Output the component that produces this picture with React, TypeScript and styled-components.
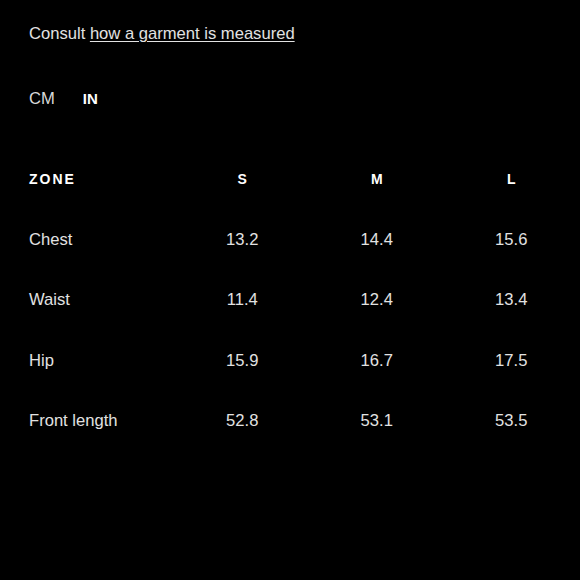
import React from "react";
import styled, { createGlobalStyle } from "styled-components";

const Global = createGlobalStyle`
  html, body { margin: 0; padding: 0; background: #000; }
  body { font-family: "Liberation Sans", Arial, sans-serif; }
`;

const Page = styled.div`
  width: 580px;
  height: 580px;
  box-sizing: border-box;
  background: #000;
  color: #e2e2e2;
  padding: 24px 29px 0 29px;
  display: flex;
  flex-direction: column;
`;

const Intro = styled.p`
  margin: 0;
  font-size: 16.6px;
  line-height: 20px;
  color: #e2e2e2;
`;

const Link = styled.a`
  color: #e2e2e2;
  text-decoration: underline;
  text-underline-offset: 2px;
  text-decoration-thickness: 1px;
`;

const Units = styled.div`
  display: flex;
  gap: 28px;
  margin-top: 45px;
`;

const Unit = styled.span<{ $active?: boolean }>`
  line-height: 20px;
  color: ${(p) => (p.$active ? "#fff" : "#d8d8d8")};
  font-weight: ${(p) => (p.$active ? 700 : 400)};
  font-size: ${(p) => (p.$active ? "15px" : "16.6px")};
`;

const Table = styled.div`
  display: grid;
  grid-template-columns: 146px repeat(3, 134.5px);
  grid-auto-rows: 60.5px;
  margin-top: 60px;
`;

const Cell = styled.div<{ $head?: boolean; $first?: boolean }>`
  display: flex;
  align-items: center;
  justify-content: ${(p) => (p.$first ? "flex-start" : "center")};
  font-size: ${(p) => (p.$head ? "14px" : "16.6px")};
  font-weight: ${(p) => (p.$head ? 700 : 400)};
  letter-spacing: ${(p) => (p.$head ? "2px" : "0")};
  padding-left: ${(p) => (p.$head && !p.$first ? "2px" : "0")};
  color: ${(p) => (p.$head ? "#fff" : "#e2e2e2")};
  height: 20px;
`;

const rows = [
  ["Chest", "13.2", "14.4", "15.6"],
  ["Waist", "11.4", "12.4", "13.4"],
  ["Hip", "15.9", "16.7", "17.5"],
  ["Front length", "52.8", "53.1", "53.5"],
];

export default function App() {
  return (
    <>
      <Global />
      <Page>
        <Intro>
          Consult <Link href="#">how a garment is measured</Link>
        </Intro>
        <Units>
          <Unit>CM</Unit>
          <Unit $active>IN</Unit>
        </Units>
        <Table>
          {["ZONE", "S", "M", "L"].map((h, i) => (
            <Cell key={h} $head $first={i === 0}>
              {h}
            </Cell>
          ))}
          {rows.map((r) =>
            r.map((v, i) => (
              <Cell key={r[0] + i} $first={i === 0}>
                {v}
              </Cell>
            ))
          )}
        </Table>
      </Page>
    </>
  );
}
